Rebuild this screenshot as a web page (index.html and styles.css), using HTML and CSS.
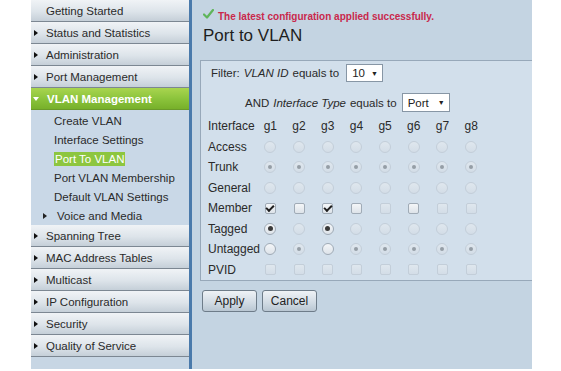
FILE: index.html
```html
<!DOCTYPE html>
<html lang="en">
<head>
  <meta charset="UTF-8">
  <title>Port to VLAN</title>
  <link rel="stylesheet" href="styles.css">
</head>
<body>
  <div class="page">
    <nav class="sidebar">
      <div class="item">Getting Started</div>
      <div class="item arrow">Status and Statistics</div>
      <div class="item arrow">Administration</div>
      <div class="item arrow">Port Management</div>
      <div class="item open">VLAN Management</div>
      <div class="submenu">
        <div class="sub">Create VLAN</div>
        <div class="sub">Interface Settings</div>
        <div class="sub"><span class="current">Port To VLAN</span></div>
        <div class="sub">Port VLAN Membership</div>
        <div class="sub">Default VLAN Settings</div>
        <div class="sub arrow">Voice and Media</div>
      </div>
      <div class="item arrow">Spanning Tree</div>
      <div class="item arrow">MAC Address Tables</div>
      <div class="item arrow">Multicast</div>
      <div class="item arrow">IP Configuration</div>
      <div class="item arrow">Security</div>
      <div class="item arrow">Quality of Service</div>
    </nav>

    <main class="content">
      <div class="status">
        <svg class="ok" width="11" height="10" viewBox="0 0 11 10"><path d="M1 5.5 L4 8.5 L10 1" fill="none" stroke="#5fb55a" stroke-width="2.2" stroke-linecap="round" stroke-linejoin="round"/></svg>
        The latest configuration applied successfully.
      </div>
      <h1>Port to VLAN</h1>

      <div class="panel">
        <div class="filter">Filter: <i>VLAN ID</i> equals to <span class="select">10 <b>&#9660;</b></span></div>
        <div class="filter second">AND <i>Interface Type</i> equals to <span class="select">Port <b>&#9660;</b></span></div>

        <div class="matrix">
          <span class="label">Interface</span>
          <span>g1</span><span>g2</span><span>g3</span><span>g4</span><span>g5</span><span>g6</span><span>g7</span><span>g8</span>

          <span class="label">Access</span>
          <i class="r"></i><i class="r"></i><i class="r"></i><i class="r"></i><i class="r"></i><i class="r"></i><i class="r"></i><i class="r"></i>

          <span class="label">Trunk</span>
          <i class="r on"></i><i class="r on"></i><i class="r on"></i><i class="r on"></i><i class="r on"></i><i class="r on"></i><i class="r on"></i><i class="r on"></i>

          <span class="label">General</span>
          <i class="r"></i><i class="r"></i><i class="r"></i><i class="r"></i><i class="r"></i><i class="r"></i><i class="r"></i><i class="r"></i>

          <span class="label">Member</span>
          <i class="c en on"></i><i class="c en"></i><i class="c en on"></i><i class="c en"></i><i class="c"></i><i class="c en"></i><i class="c"></i><i class="c"></i>

          <span class="label">Tagged</span>
          <i class="r en on"></i><i class="r"></i><i class="r en on"></i><i class="r"></i><i class="r"></i><i class="r"></i><i class="r"></i><i class="r"></i>

          <span class="label">Untagged</span>
          <i class="r en"></i><i class="r on"></i><i class="r en"></i><i class="r on"></i><i class="r on"></i><i class="r on"></i><i class="r on"></i><i class="r on"></i>

          <span class="label">PVID</span>
          <i class="c"></i><i class="c"></i><i class="c"></i><i class="c"></i><i class="c"></i><i class="c"></i><i class="c"></i><i class="c"></i>
        </div>
      </div>

      <div class="buttons">
        <button>Apply</button>
        <button>Cancel</button>
      </div>
    </main>
  </div>
</body>
</html>
```

FILE: styles.css
```css
* { box-sizing: border-box; }

body {
  margin: 0;
  background: #fff;
  font-family: "Liberation Sans", Arial, sans-serif;
  color: #222;
}

.page {
  display: flex;
  height: 369px;
  padding-left: 31px;
}

/* left navigation */
.sidebar {
  width: 161px;
  background: #c7d6e4;
  border-right: 3px solid #4a7aab;
  font-size: 11.5px;
}

.item {
  display: flex;
  align-items: center;
  height: 22px;
  color: #2a2a2a;
  background: linear-gradient(to bottom, #f0f3f6, #dde4ea 55%, #c5cfd8);
  border-bottom: 1px solid #7c8792;
}

.item::before {
  content: "";
  margin: 0 8px 0 3px;
  border-left: 4px solid transparent;
  border-top: 3px solid transparent;
  border-bottom: 3px solid transparent;
}

.item.arrow::before { border-left-color: #111; }

.item.open {
  color: #fff;
  font-weight: bold;
  background: linear-gradient(to bottom, #a9d54f, #8cc43c 50%, #77b02a);
  border-bottom-color: #6a9a2a;
}

.item.open::before {
  margin: 0 8px 0 2px;
  border-top: 4px solid #fff;
  border-left: 3px solid transparent;
  border-right: 3px solid transparent;
  border-bottom: 0;
}

.submenu {
  background: #c9d8e7;
  padding: 1px 0 0;
  border-bottom: 1px solid #7c8792;
  margin-bottom: -1px;
}

.sub {
  display: flex;
  align-items: center;
  height: 19px;
  padding-left: 23px;
  color: #2a2a2a;
}

.sub.arrow { padding-left: 12px; }

.sub.arrow::before {
  content: "";
  margin-right: 10px;
  border-left: 4px solid #222;
  border-top: 3px solid transparent;
  border-bottom: 3px solid transparent;
}

.current {
  background: #8dc63f;
  color: #fff;
  padding: 1px 1px;
}

/* main area */
.content {
  width: 340px;
  background: #c4d4e2;
  padding-top: 8px;
  font-size: 11.5px;
}

.status {
  display: flex;
  align-items: flex-end;
  gap: 4px;
  height: 14px;
  padding-left: 11px;
  color: #c9284c;
  font-size: 10px;
  font-weight: bold;
}

.ok { margin-bottom: 3px; }

h1 {
  margin: 3px 0 0 11px;
  font-size: 17px;
  font-weight: normal;
  line-height: 22px;
  color: #1e1e1e;
}

.panel {
  margin: 13px 0 0 8px;
  background: #d2dfeb;
  border: 1px solid #97a8b9;
  border-right: 0;
  padding: 3px 0 0 10px;
  height: 221px;
}

.filter {
  display: flex;
  align-items: center;
  gap: 4px;
  height: 18px;
  color: #2a2a2a;
}

.filter i { font-style: italic; }

.filter.second {
  margin-top: 11px;
  padding-left: 34px;
  height: 19px;
}

.select {
  display: inline-flex;
  align-items: center;
  gap: 6px;
  height: 100%;
  margin-left: 3px;
  padding: 0 4px 0 5px;
  background: #fff;
  border: 1px solid #8796a5;
  color: #222;
}

.second .select { margin-left: 1px; gap: 9px; }

.select b {
  font-size: 7px;
  font-weight: normal;
}

.matrix {
  display: grid;
  grid-template-columns: 48px repeat(8, 28.7px);
  grid-auto-rows: 20.5px;
  align-items: center;
  justify-items: center;
  margin: 4px 0 0 -3px;
  font-size: 12px;
  color: #2a2a2a;
}

.matrix .label { justify-self: start; }

/* radios and checkboxes */
.r, .c {
  display: flex;
  align-items: center;
  justify-content: center;
  width: 12px;
  height: 12px;
  background: linear-gradient(to bottom, #dfe7ee, #d3dde7);
  border: 1px solid #c3ced9;
}

.r { border-radius: 50%; }
.c { border-radius: 2px; width: 11px; height: 11px; }

.r.en, .c.en {
  background: linear-gradient(to bottom, #f4f6f8, #dde3e9);
  border-color: #a0abb6;
}

.r.on::after {
  content: "";
  width: 4px;
  height: 4px;
  border-radius: 50%;
  background: #959ea6;
}

.r.en.on::after {
  width: 5px;
  height: 5px;
  background: #3a3a3a;
}

.c.on::after {
  content: "";
  width: 6px;
  height: 3px;
  margin-top: -2px;
  border-left: 2px solid #1e1e1e;
  border-bottom: 2px solid #1e1e1e;
  transform: rotate(-45deg);
}

.buttons {
  display: flex;
  gap: 5px;
  margin: 9px 0 0 10px;
}

button {
  width: 55px;
  height: 22px;
  padding: 0;
  font-family: inherit;
  font-size: 12px;
  color: #222;
  background: linear-gradient(to bottom, #eef2f6, #d0dae3 60%, #b9c6d2);
  border: 1px solid #6e7c89;
  border-radius: 3px;
}
```
